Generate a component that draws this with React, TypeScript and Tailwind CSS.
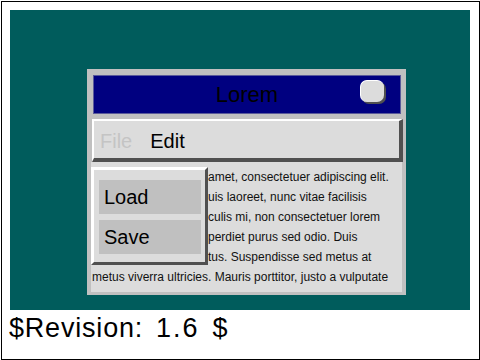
export default function App() {
  const lines: string[] = [
    "amet, consectetuer adipiscing elit.",
    "uis laoreet, nunc vitae facilisis",
    "culis mi, non consectetuer lorem",
    "perdiet purus sed odio. Duis",
    "tus. Suspendisse sed metus at",
  ];
  return (
    <div className="w-[480px] h-[360px] bg-white pl-[1px] pt-[1px] font-['Liberation_Sans',Arial,sans-serif] text-black">
      <div className="w-[479px] h-[359px] border border-black p-[8px]">
        <div className="w-[460px] h-[300px] bg-[#005c5c] pl-[77px] pt-[59px]">
          <div className="w-[319px] h-[226px] bg-[#c0c0c0] flex flex-col">
            <div className="relative ml-[6px] mt-[6px] w-[308px] h-[39px] shrink-0 bg-[#000080] border border-[#5a5a9a] flex items-center justify-center text-[22px] leading-none">
              <span>Lorem</span>
              <div className="absolute left-[266px] top-[4px] w-[24px] h-[22px] rounded-[7px] bg-[#dcdcdc] border-t border-l border-white shadow-[2px_2px_0_#505050]" />
            </div>
            <div className="ml-[5px] mt-[5px] w-[311px] h-[43px] shrink-0 bg-[#dcdcdc] border-t-2 border-l-2 border-r-4 border-b-4 border-t-white border-l-white border-r-[#505050] border-b-[#505050] flex items-center pl-[6px] pt-[3px] gap-[18px] text-[20px] leading-none">
              <span className="text-[#c4c4c4]">File</span>
              <span>Edit</span>
            </div>
            <div className="relative ml-[4px] w-[311px] h-[130px] shrink-0 bg-[#dcdcdc] pt-[5px] pl-[1px] text-[12px] leading-[20px] text-[#111]">
              {lines.map((t, i) => (
                <div key={i} className="pl-[116px] whitespace-nowrap">{t}</div>
              ))}
              <div className="whitespace-nowrap">metus viverra ultricies. Mauris porttitor, justo a vulputate</div>
              <div className="absolute left-0 top-[5px] w-[117px] h-[98px] bg-[#dcdcdc] border-t-[3px] border-l-[3px] border-r-[3px] border-b-[3px] border-t-white border-l-white border-r-[#505050] border-b-[#505050] pl-[5px] pt-[10px] flex flex-col gap-[6px] text-[20px] text-black">
                <div className="w-[102px] h-[34px] bg-[#c0c0c0] pl-[5px] leading-[34px]">Load</div>
                <div className="w-[102px] h-[34px] bg-[#c0c0c0] pl-[5px] leading-[34px]">Save</div>
              </div>
            </div>
          </div>
        </div>
        <div className="mt-[3px] -ml-[1px] text-[27px] leading-[31px] whitespace-nowrap flex">
          <span className="tracking-[0.8px]">$Revision:</span>
          <span className="ml-[13px] tracking-[2px]">1.6</span>
          <span className="ml-[13px]">$</span>
        </div>
      </div>
    </div>
  );
}
